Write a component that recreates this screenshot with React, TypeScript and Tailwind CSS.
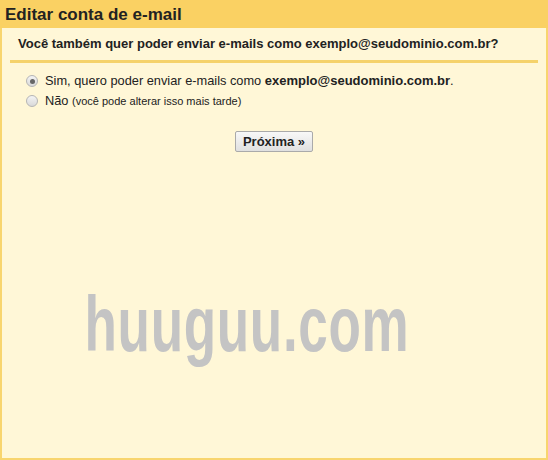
import React from "react";

export default function App() {
  const [choice, setChoice] = React.useState<"sim" | "nao">("sim");

  return (
    <div className="w-[548px] h-[460px] flex flex-col bg-white font-['Liberation_Sans',Arial,sans-serif] text-[#222]">
      <div className="h-[28px] shrink-0 bg-[#fad163] flex items-center pl-[5px]">
        <h1 className="text-[17px] font-bold text-[#222] leading-none">Editar conta de e-mail</h1>
      </div>
      <div className="flex-1 flex flex-col bg-[#fff7d7] border-x-2 border-b-2 border-[#f8d56e] px-[8px]">
        <div className="pt-[8px] pb-[8px] pl-[8px] border-b-[3px] border-[#f5d26b] text-[13px] font-bold leading-[16px]">
          Você também quer poder enviar e-mails como exemplo@seudominio.com.br?
        </div>
        <div className="flex flex-col gap-[4px] pt-[10px] pl-[16px]">
          <label className="flex items-center gap-[7px] text-[12.8px] leading-[16px]">
            <Radio checked={choice === "sim"} onClick={() => setChoice("sim")} />
            <span>
              Sim, quero poder enviar e-mails como <b className="text-[13px]">exemplo@seudominio.com.br</b>.
            </span>
          </label>
          <label className="flex items-center gap-[7px] text-[12.8px] leading-[16px]">
            <Radio checked={choice === "nao"} onClick={() => setChoice("nao")} />
            <span>
              Não <span className="text-[11px]">(você pode alterar isso mais tarde)</span>
            </span>
          </label>
        </div>
        <div className="flex justify-center pt-[22px]">
          <button className="h-[21px] px-[7px] border border-[#aaa] rounded-[2px] bg-gradient-to-b from-[#f8f8f8] to-[#e0e0e0] text-[13px] font-bold leading-none text-[#222]">
            Próxima »
          </button>
        </div>
        <div className="flex justify-center pt-[133px] pr-[54px]">
          <span className="inline-block text-[78px] font-bold leading-none text-[#c4c4c4] scale-x-[0.68] tracking-[1px] select-none">
            huuguu.com
          </span>
        </div>
      </div>
    </div>
  );
}

function Radio({ checked, onClick }: { checked: boolean; onClick: () => void }) {
  return (
    <span
      onClick={onClick}
      className="w-[12px] h-[12px] rounded-full border border-[#b5b5b5] bg-gradient-to-b from-[#f4f4f4] to-[#d9d9d9] flex items-center justify-center shrink-0"
    >
      {checked && <span className="w-[5px] h-[5px] rounded-full bg-[#666]" />}
    </span>
  );
}
